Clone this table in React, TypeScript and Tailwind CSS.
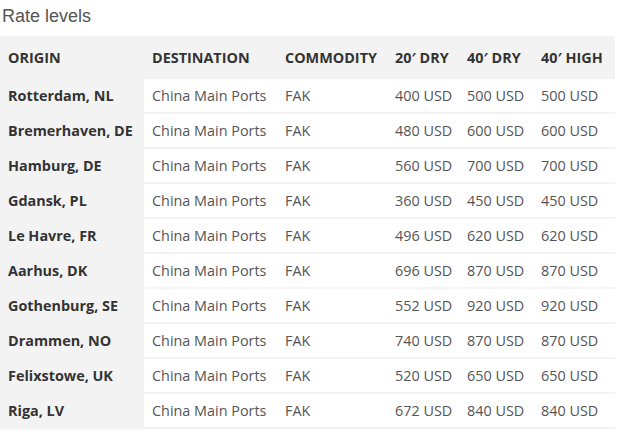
import React from 'react';

interface Rate {
  origin: string;
  dry20: number;
  dry40: number;
  high40: number;
}

const rates: Rate[] = [
  { origin: 'Rotterdam, NL', dry20: 400, dry40: 500, high40: 500 },
  { origin: 'Bremerhaven, DE', dry20: 480, dry40: 600, high40: 600 },
  { origin: 'Hamburg, DE', dry20: 560, dry40: 700, high40: 700 },
  { origin: 'Gdansk, PL', dry20: 360, dry40: 450, high40: 450 },
  { origin: 'Le Havre, FR', dry20: 496, dry40: 620, high40: 620 },
  { origin: 'Aarhus, DK', dry20: 696, dry40: 870, high40: 870 },
  { origin: 'Gothenburg, SE', dry20: 552, dry40: 920, high40: 920 },
  { origin: 'Drammen, NO', dry20: 740, dry40: 870, high40: 870 },
  { origin: 'Felixstowe, UK', dry20: 520, dry40: 650, high40: 650 },
  { origin: 'Riga, LV', dry20: 672, dry40: 840, high40: 840 },
];

const headers = ['ORIGIN', 'DESTINATION', 'COMMODITY', '20′ DRY', '40′ DRY', '40′ HIGH'];

const App: React.FC = () => {
  return (
    <div className="w-[617px] h-[432px] overflow-hidden bg-white">
      <h2 className="h-[36px] pl-[2px] pt-[5px] font-['Liberation_Sans',Arial,sans-serif] text-[18px] leading-[22px] text-[#555]">
        Rate levels
      </h2>
      <table className="w-[615px] table-fixed border-separate border-spacing-0 bg-[#f3f3f3] font-['Open_Sans',sans-serif] text-[14.4px]">
        <colgroup>
          <col className="w-[144px]" />
          <col className="w-[133px]" />
          <col className="w-[110px]" />
          <col className="w-[72px]" />
          <col className="w-[74px]" />
          <col className="w-[82px]" />
        </colgroup>
        <thead>
          <tr className="h-[43px]">
            {headers.map((h) => (
              <th
                key={h}
                className="pl-[8px] text-left align-middle font-bold text-[#333] whitespace-nowrap"
              >
                {h}
              </th>
            ))}
          </tr>
        </thead>
        <tbody>
          {rates.map((r) => (
            <tr key={r.origin} className="h-[35px]">
              <td className="pl-[8px] font-bold text-[#333] whitespace-nowrap border-b-2 border-[#f3f3f3]">
                {r.origin}
              </td>
              <td className="pl-[8px] bg-white text-[#555] whitespace-nowrap border-b-2 border-[#f3f3f3]">
                China Main Ports
              </td>
              <td className="pl-[8px] bg-white text-[#555] border-b-2 border-[#f3f3f3]">FAK</td>
              <td className="pl-[8px] bg-white text-[#555] whitespace-nowrap border-b-2 border-[#f3f3f3]">
                {r.dry20} USD
              </td>
              <td className="pl-[8px] bg-white text-[#555] whitespace-nowrap border-b-2 border-[#f3f3f3]">
                {r.dry40} USD
              </td>
              <td className="pl-[8px] bg-white text-[#555] whitespace-nowrap border-b-2 border-[#f3f3f3]">
                {r.high40} USD
              </td>
            </tr>
          ))}
        </tbody>
      </table>
    </div>
  );
};

export default App;
